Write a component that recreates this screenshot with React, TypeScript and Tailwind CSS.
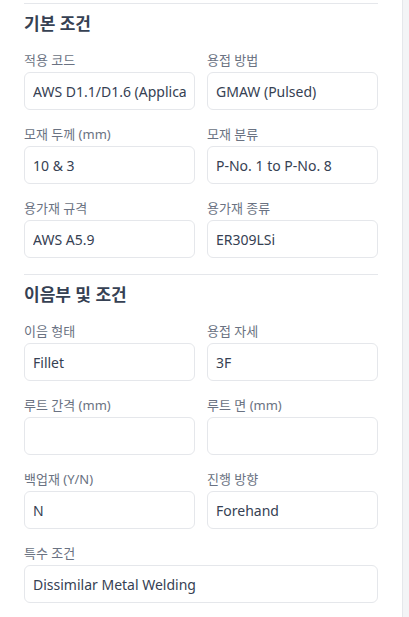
import React from "react";

const font = { fontFamily: '"Noto Sans", "Noto Sans CJK KR", sans-serif' };

function Field({ label, value, full }: { label: string; value: string; full?: boolean }) {
  return (
    <div className={full ? "col-span-2 flex flex-col" : "flex flex-col"}>
      <label className="text-[13px] leading-5 text-gray-500 mb-0.5">{label}</label>
      <input
        readOnly
        value={value}
        className="h-[38px] w-full rounded-md border border-gray-200 bg-white px-[8px] text-[14px] text-gray-700 outline-none"
      />
    </div>
  );
}

function Section({ title, children }: { title: string; children: React.ReactNode }) {
  return (
    <section className="border-t border-gray-200 pt-2 pb-4">
      <h2 className="text-[17px] leading-6 font-semibold text-gray-700 mb-3.5">{title}</h2>
      <div className="grid grid-cols-2 gap-x-3 gap-y-[14px]">{children}</div>
    </section>
  );
}

export default function App() {
  return (
    <div className="flex h-[617px] w-[409px] overflow-hidden bg-[#f3f4f6]" style={font}>
      <div className="w-[403px] shrink-0 border-r border-gray-200 bg-white px-6 pt-[3px]">
        <Section title="기본 조건">
          <Field label="적용 코드" value="AWS D1.1/D1.6 (Applicable Code)" />
          <Field label="용접 방법" value="GMAW (Pulsed)" />
          <Field label="모재 두께 (mm)" value="10 & 3" />
          <Field label="모재 분류" value="P-No. 1 to P-No. 8" />
          <Field label="용가재 규격" value="AWS A5.9" />
          <Field label="용가재 종류" value="ER309LSi" />
        </Section>
        <Section title="이음부 및 조건">
          <Field label="이음 형태" value="Fillet" />
          <Field label="용접 자세" value="3F" />
          <Field label="루트 간격 (mm)" value="" />
          <Field label="루트 면 (mm)" value="" />
          <Field label="백업재 (Y/N)" value="N" />
          <Field label="진행 방향" value="Forehand" />
          <Field label="특수 조건" value="Dissimilar Metal Welding" full />
        </Section>
      </div>
    </div>
  );
}
